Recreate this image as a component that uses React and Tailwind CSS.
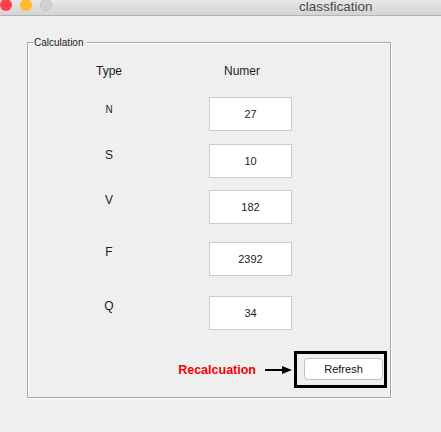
import React from "react";

const rows = [
  { l: "N", v: "27", small: true, mt: "mt-0", lt: "mt-[7px]" },
  { l: "S", v: "10", mt: "mt-[13px]", lt: "mt-[4px]" },
  { l: "V", v: "182", mt: "mt-[12px]", lt: "mt-[3px]" },
  { l: "F", v: "2392", mt: "mt-[18px]", lt: "mt-[3px]" },
  { l: "Q", v: "34", mt: "mt-[20px]", lt: "mt-[3px]" },
];

export default function App() {
  return (
    <div
      className="w-[441px] h-[432px] overflow-hidden bg-[#efefef] text-[#1c1c1c]"
      style={{ fontFamily: '"Liberation Sans", Arial, sans-serif' }}
    >
      {/* title bar */}
      <div className="relative h-[16px] border-b border-[#b3b3b3] bg-gradient-to-b from-[#e6e6e6] to-[#d4d4d4] flex items-start">
        <div className="flex gap-[8px] -mt-[1px]">
          <div className="w-[12px] h-[12px] rounded-full bg-[#fc3f4b]" />
          <div className="w-[12px] h-[12px] rounded-full bg-[#fdbb2d]" />
          <div className="w-[12px] h-[12px] rounded-full bg-[#d2d2d2] border border-[#c4c4c4]" />
        </div>
        <div className="ml-[247px] text-[13.5px] leading-[14px] text-[#4a4a4a]">classfication</div>
      </div>

      {/* content */}
      <div className="pt-[26px] pl-[27px]">
        <div className="relative w-[364px] h-[356px] border border-[#a6a6a6] shadow-[inset_1px_1px_0_#ffffff,1px_1px_0_#ffffff]">
          <div className="absolute left-[5px] -top-[6px] pl-[1px] pr-[4px] bg-[#efefef] text-[10px] leading-[11px] text-[#222]">
            Calculation
          </div>

          {/* header */}
          <div className="flex pt-[21px] text-[12px] leading-[14px]">
            <div className="ml-[68px]">Type</div>
            <div className="ml-[102px]">Numer</div>
          </div>

          {/* rows */}
          <div className="mt-[19px] flex flex-col">
            {rows.map((r) => (
              <div key={r.l} className={`flex items-start ${r.mt}`}>
                <div
                  className={`w-[60px] ml-[51px] text-center ${r.lt} ${
                    r.small ? "text-[10px] leading-[12px]" : "text-[12px] leading-[14px]"
                  }`}
                >
                  {r.l}
                </div>
                <div className="ml-[70px] w-[83px] h-[34px] bg-white border border-[#cbcbcb] flex items-center justify-center text-[11px] text-[#222]">
                  {r.v}
                </div>
              </div>
            ))}
          </div>

          {/* bottom */}
          <div className="mt-[21px] flex items-center justify-end pr-[3px]">
            <div className="text-[12.5px] font-bold text-[#f20000] leading-[16px]">Recalcuation</div>
            <svg className="ml-[9px]" width="27" height="10" viewBox="0 0 27 10">
              <line x1="0" y1="5" x2="19" y2="5" stroke="#000" strokeWidth="2" />
              <polygon points="17,1 27,5 17,9" fill="#000" />
            </svg>
            <div className="ml-[2px] w-[93px] h-[37px] border-[3px] border-black pl-[7px] pt-[4px]">
              <div className="w-[79px] h-[22px] rounded-[4px] bg-white border border-[#c2c2c2] flex items-center justify-center text-[11px] text-[#111]">
                Refresh
              </div>
            </div>
          </div>
        </div>
      </div>
    </div>
  );
}
